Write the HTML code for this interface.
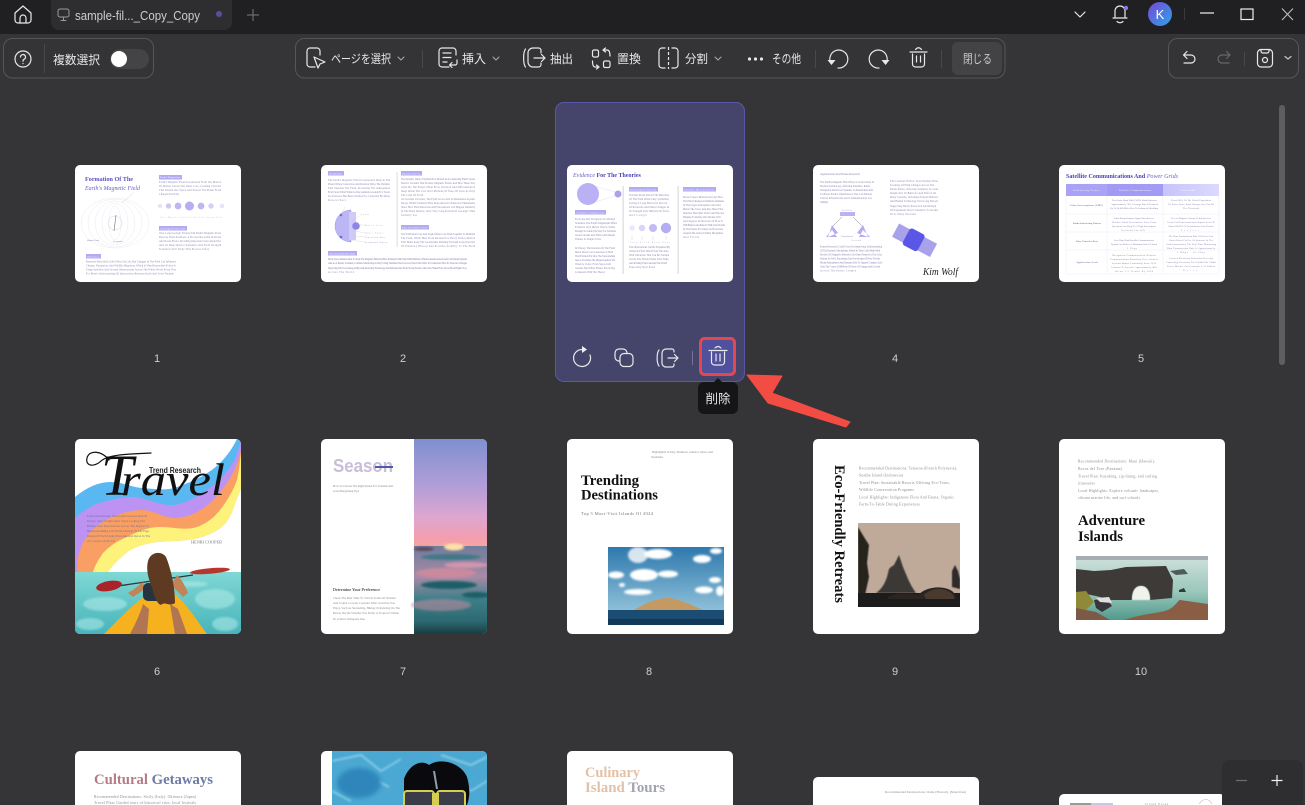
<!DOCTYPE html>
<html><head><meta charset="utf-8">
<style>
html,body{margin:0;padding:0;width:1305px;height:805px;overflow:hidden;background:#353437}
body{position:relative;font-family:"Liberation Sans","Noto Sans CJK JP",sans-serif}
.abs{position:absolute}
.c{position:absolute;width:166px;border-radius:5px;background:#fff;overflow:hidden;display:block;filter:blur(.35px)}
.c text{font-family:"Liberation Serif",serif}
.l{font-size:2.6px;fill:#8a86ae}
.g{font-size:3.8px;fill:#8c8b91}
.g2{font-size:4.6px;fill:#77767c}
.tag{fill:#b2abf2}
.tt{font-size:2.4px;fill:#fff}
.t5{font-size:2.4px;fill:#8581a8}
.b{font-weight:bold}
.ui{position:absolute;left:0;top:0}
.ui text{font-family:"Liberation Sans","Noto Sans CJK JP",sans-serif;fill:#e6e6e6;font-size:12px}
.s{fill:none;stroke:#e8e8e8;stroke-width:1.2;stroke-linecap:round;stroke-linejoin:round}
.n{position:absolute;color:#cfcfcf;font-size:11px;width:40px;text-align:center;line-height:14px}
</style></head><body>

<svg width="0" height="0" style="position:absolute"><defs>
<filter id="b1"><feGaussianBlur stdDeviation="1"/></filter>
<filter id="b2"><feGaussianBlur stdDeviation="2.2"/></filter>
<filter id="b05"><feGaussianBlur stdDeviation=".5"/></filter>
<linearGradient id="sky7" x1="0" y1="0" x2="0" y2="1"><stop offset="0" stop-color="#7f90cf"/><stop offset=".4" stop-color="#ae9dd8"/><stop offset=".7" stop-color="#dca6d0"/><stop offset=".9" stop-color="#f39eb0"/><stop offset="1" stop-color="#f7a79a"/></linearGradient>
<linearGradient id="sea7" x1="0" y1="0" x2="0" y2="1"><stop offset="0" stop-color="#6f7d9b"/><stop offset=".35" stop-color="#a98aa6"/><stop offset=".6" stop-color="#3e7f8a"/><stop offset=".85" stop-color="#2d6a72"/><stop offset="1" stop-color="#173c40"/></linearGradient>
<linearGradient id="sky8" x1="0" y1="0" x2="0" y2="1"><stop offset="0" stop-color="#2e79ae"/><stop offset="1" stop-color="#8fc0d8"/></linearGradient>
<linearGradient id="hd" x1="0" y1="0" x2="1" y2="0"><stop offset="0" stop-color="#a49df6"/><stop offset="1" stop-color="#dcd9ff"/></linearGradient>
<linearGradient id="av" x1="0" y1="0" x2="1" y2="1"><stop offset="0" stop-color="#7a45d8"/><stop offset="1" stop-color="#2aa5e8"/></linearGradient>
<linearGradient id="sea10" x1="0" y1="0" x2="0" y2="1"><stop offset="0" stop-color="#cfe0dc"/><stop offset=".55" stop-color="#9cc8bc"/><stop offset="1" stop-color="#4f9a8c"/></linearGradient>
<linearGradient id="w6" x1="0" y1="0" x2="0" y2="1"><stop offset="0" stop-color="#7fd8d4"/><stop offset="1" stop-color="#48b4bb"/></linearGradient>
</defs></svg>

<!-- top bar / selected card background -->
<div class="abs" style="left:0;top:0;width:1305px;height:34px;background:#202022"></div>
<div class="abs" style="left:51px;top:0;width:181px;height:30px;background:#2e2e31;border-radius:0 0 8px 8px"></div>
<div class="abs" style="left:1279px;top:105px;width:6px;height:260px;background:#5f5d60;border-radius:3px"></div>
<div class="abs" style="left:555px;top:102px;width:188px;height:278px;background:#45456b;border:1px solid #5a56ae;border-radius:9px"></div>

<!-- Card 1 -->
<svg class="c" style="left:75px;top:165px;height:117px" viewBox="0 0 166 117">
<text x="10" y="16" class="b" font-size="6.2" fill="#5c50bf" textLength="48" lengthAdjust="spacingAndGlyphs">Formation Of The</text>
<text x="10" y="25" font-style="italic" font-size="6.2" fill="#6a60c6" textLength="55" lengthAdjust="spacingAndGlyphs">Earth's Magnetic Field</text>
<rect class="tag" x="84" y="10" width="23" height="4.5"/><text class="tt" x="85" y="13.2" textLength="20">Earth's Magnetism</text>
<text class="l" x="84" y="18" textLength="62">Earth's Magnetic Field Is Generated From The Motion</text>
<text class="l" x="84" y="22" textLength="62">Of Molten Iron In The Outer Core, Creating Currents</text>
<text class="l" x="84" y="26" textLength="62">That Extend Into Space And Protect The Planet From</text>
<text class="l" x="84" y="30" textLength="20">Charged Particles</text>
<g><circle cx="85" cy="41" r="2" fill="#e3e0fa"/><circle cx="93.500" cy="41" r="2.700" fill="#cdc8f6"/><circle cx="103" cy="41" r="3.400" fill="#bdb6f3"/><circle cx="114.500" cy="41" r="4.500" fill="#b5aef2"/><circle cx="126" cy="41" r="3.400" fill="#bdb6f3"/><circle cx="136" cy="41" r="2.700" fill="#d3cff7"/><circle cx="147" cy="41" r="2.300" fill="#e6e4fa"/></g>
<text class="l" x="85" y="53" textLength="62" style="font-size:2px;fill:#b5b3c6">Core  Mantle  Crust  Field  Solar  Storm  Flux</text>
<rect class="tag" x="84" y="61" width="28" height="4.500"/><text class="tt" x="85" y="64.300" textLength="25">Geomagnetic Reversal</text>
<text class="l" x="84" y="69" textLength="62">Over Long Geologic Periods The Earth's Magnetic Poles</text>
<text class="l" x="84" y="73" textLength="62">Reverse Their Positions, A Process Recorded In Rocks</text>
<text class="l" x="84" y="77" textLength="62">And Ocean Floors, Providing Important Clues About Past</text>
<text class="l" x="84" y="81" textLength="62">And Its Deep Interior Dynamics And Field Strength</text>
<text class="l" x="84" y="85" textLength="50">Scientists Still Study This Process Today</text>
<g fill="none" stroke="#dcdbe9" stroke-width=".3"><ellipse cx="40" cy="58" rx="6" ry="17"/><ellipse cx="40" cy="58" rx="13" ry="20"/><ellipse cx="40" cy="58" rx="20" ry="22"/><ellipse cx="40" cy="58" rx="27" ry="24"/><ellipse cx="40" cy="58" rx="34" ry="25"/><circle cx="40" cy="58" r="7" stroke="#b5b2cc"/><path d="M41 50L39 66" stroke="#777" stroke-width=".6"/><path d="M47 38L58 28" stroke="#bbb"/></g>
<text class="l" x="12" y="76" style="font-size:2px" textLength="12">Magnetic South</text><text class="l" x="38" y="77" style="font-size:2px" textLength="10">Geographic</text>
<rect class="tag" x="11" y="89" width="15" height="4.500"/><text class="tt" x="12" y="92.300" textLength="12">Influences</text>
<text class="l" x="11" y="97.500" textLength="90">Reversals Have Had Little Effect On Life, But Changes In The Field Can Influence</text>
<text class="l" x="11" y="101.500" textLength="90">Climate, Navigation, And Wildlife Migration, Which Is Why Researchers Follow It</text>
<text class="l" x="11" y="105.500" textLength="90">Using Satellites And Ground Observatories Across The Whole World Every Year</text>
<text class="l" x="11" y="109.500" textLength="88">For Better Understanding Of Interactions Between Earth And Solar Weather</text>
</svg>

<!-- Card 2 -->
<svg class="c" style="left:321px;top:165px;height:117px" viewBox="0 0 166 117">
<rect class="tag" x="7" y="6" width="16" height="4.500"/><text class="tt" x="8" y="9.300" textLength="13">Introduction</text>
<text class="l" x="7" y="16" textLength="62">The Earth's Magnetic Field Is Generated Deep In The</text>
<text class="l" x="7" y="20" textLength="62">Planet Where Convection And Rotation Drive The Dynamo</text>
<text class="l" x="7" y="24" textLength="62">That Sustains The Field, Protecting The Atmosphere</text>
<text class="l" x="7" y="28" textLength="62">From Solar Wind While Giving Animals A Guide For Travel</text>
<text class="l" x="7" y="32" textLength="62">Its Structure Has Been Studied For Centuries By Many</text>
<text class="l" x="7" y="36" textLength="18">Researchers</text>
<path d="M30 45A16 16 0 0 0 30 77L30 45Z" fill="#bdb6f5" stroke="#8f88e0" stroke-width=".4"/><rect x="28" y="47" width="7" height="28" fill="#cfcaf8"/><circle cx="35" cy="61" r="3.800" fill="#8d84ea"/><circle cx="20" cy="50" r="1.300" fill="#7068d8"/><circle cx="20" cy="72" r="1.300" fill="#7068d8"/>
<g stroke="#bbb" stroke-width=".25" fill="none"><path d="M20 50L24 42M24 52L30 44M30 56L40 50M36 60L44 60M34 66L44 68M32 71L44 72M30 75L44 77"/></g>
<text class="l" style="font-size:1.800px" x="40" y="50" textLength="8">Crust</text><text class="l" style="font-size:1.800px" x="44" y="61" textLength="18">Outer Core</text><text class="l" style="font-size:1.800px" x="44" y="68.500" textLength="18">Inner Layer</text><text class="l" style="font-size:1.800px" x="44" y="73" textLength="20">Convection Zone</text><text class="l" style="font-size:1.800px" x="44" y="78" textLength="22">Geodynamo Region</text>
<rect x="75.800" y="7" width=".5" height="75" fill="#b8b8c2"/>
<rect class="tag" x="80" y="6" width="21" height="4.500"/><text class="tt" x="81" y="9.300" textLength="18">Dynamo Theory</text>
<text class="l" x="80" y="15" textLength="74">The Dynamo Theory Explains How Motion In A Conducting Fluid Creates</text>
<text class="l" x="80" y="19" textLength="74">Electric Currents That Produce Magnetic Fields, And How These Stay</text>
<text class="l" x="80" y="23" textLength="74">Alive By The Planet's Heat Flow, Rotation And Differentiation</text>
<text class="l" x="80" y="27" textLength="74">Deep Inside The Core Over Millions Of Years Of Slow Activity</text>
<text class="l" x="80" y="31" textLength="22">The Crust Of Earth</text>
<text class="l" x="80" y="35" textLength="74">As Currents Circulate, The Field Grows And Is Maintained Against</text>
<text class="l" x="80" y="39" textLength="74">Decay, Which Scientists Have Reproduced In Numerical Simulations</text>
<text class="l" x="80" y="43" textLength="74">Show How Field Reversals And Fluctuations Can Happen Suddenly</text>
<text class="l" x="80" y="47" textLength="74">In The Deep Interior, Over Very Long Periods Of Geologic Time</text>
<text class="l" x="80" y="51" textLength="16">Globally Too</text>
<rect class="tag" x="80" y="60" width="28" height="4.500"/><text class="tt" x="81" y="63.300" textLength="25">Role Of Earth's Core</text>
<text class="l" x="80" y="70" textLength="74">The Solid Inner Core And Liquid Outer Core Work Together To Maintain</text>
<text class="l" x="80" y="74" textLength="74">The Field, While Heat From Radioactive Decay Drives Motion</text>
<text class="l" x="80" y="78" textLength="74">That Helps Keep The Geodynamo Running Through Long Intervals</text>
<text class="l" x="80" y="82" textLength="74">Of Planetary History And Provides Stability To The Field</text>
<rect class="tag" x="7" y="86" width="29" height="4.500"/><text class="tt" x="8" y="89.300" textLength="26">Interaction With Solar Wind</text>
<text class="l" x="7" y="95" textLength="139">Many Space Missions Aim To Study The Magnetic Field And How It Interacts With Solar Wind Particles, Which Generates Auroras And Can Disrupt Systems</text>
<text class="l" x="7" y="99" textLength="139">And As A Result, Scientists Continue Monitoring Activity Using Satellites Placed Across Near Earth Orbit To Understand How Its Structure Changes</text>
<text class="l" x="7" y="104" textLength="139">Improving Our Forecasting Ability And Protecting Technology And Infrastructure From Strong Storms, Since The Stakes Have Never Been Higher Now</text>
<text class="l" x="7" y="108" textLength="26">Across The World</text>
</svg>

<!-- Card 3 -->
<svg class="c" style="left:567px;top:165px;height:117px" viewBox="0 0 166 117">
<text x="6" y="12" font-size="6" fill="#6a60c6" font-style="italic">Evidence<tspan class="b" font-style="normal" fill="#4a3fb5"> For The Theories</tspan></text>
<circle cx="21" cy="29" r="11" fill="#b9b1f3"/><circle cx="51" cy="29" r="3.500" fill="#a9a1ee"/><path d="M28 21L48 27M28 37L48 31" stroke="#cfcce8" stroke-width=".3" fill="none"/>
<rect class="tag" x="8" y="45" width="31" height="4.500"/><text class="tt" x="9" y="48.300" textLength="28">Compass Alignments</text>
<text class="l" x="8" y="55" textLength="40">From Ancient Navigators To Modern</text><text class="l" x="8" y="59" textLength="42">Scientists, The Earth's Magnetism Offers</text><text class="l" x="8" y="63" textLength="40">Evidence Of A Dipole That Is Stable</text><text class="l" x="8" y="67" textLength="41">Enough To Guide The Way For Travelers</text><text class="l" x="8" y="71" textLength="40">Across Oceans And Wide Land Masses</text><text class="l" x="8" y="75" textLength="26">Thanks To Simple Tools</text>
<text class="l" x="8" y="84" textLength="40">In Theory, The Rotation Of The Fluid</text><text class="l" x="8" y="88" textLength="38">Metal Outer Core Generates A Field</text><text class="l" x="8" y="92" textLength="40">That Extends Far Into The Surrounding</text><text class="l" x="8" y="96" textLength="40">Space, Forming The Magnetosphere We</text><text class="l" x="8" y="100" textLength="36">Observe Today From Spacecraft</text><text class="l" x="8" y="104" textLength="40">Around The Whole Planet, Every Day</text><text class="l" x="8" y="108" textLength="30">Consistent With The Theory</text>
<rect x="55.800" y="21" width=".5" height="88" fill="#a8a8b4"/><rect x="110.800" y="21" width=".5" height="88" fill="#a8a8b4"/>
<rect class="tag" x="62" y="22" width="29" height="4.500"/><text class="tt" x="63" y="25.300" textLength="26">Paleomagnetic Records</text>
<text class="l" x="62" y="31" textLength="40">Volcanic Rocks Record The Direction</text><text class="l" x="62" y="35" textLength="40">Of The Field When They Solidified,</text><text class="l" x="62" y="39" textLength="38">Giving A Long Historical Record</text><text class="l" x="62" y="43" textLength="40">Of Reversals And Other Changes In</text><text class="l" x="62" y="47" textLength="40">Its Strength Over Millions Of Years</text><text class="l" x="62" y="51" textLength="18">And Longer</text>
<circle cx="65" cy="63" r="2.800" fill="#ebe9fb"/><circle cx="75" cy="63" r="3.200" fill="#d9d5f9"/><circle cx="86" cy="63" r="4" fill="#c1bbf5"/><circle cx="99" cy="63" r="5.200" fill="#b4adf2"/>
<path d="M65 71V75M75 71V75M86 71V75M99 71V75" stroke="#bbb" stroke-width=".3"/>
<text class="l" x="63" y="78" style="font-size:1.800px" textLength="40">Iron  Field  Rock  Core</text>
<text class="l" x="62" y="83" textLength="41">The Observations Can Be Explained By</text><text class="l" x="62" y="87" textLength="40">A Dipole Field Tilted From The Axis,</text><text class="l" x="62" y="91" textLength="40">With Variations That Can Be Tracked</text><text class="l" x="62" y="95" textLength="40">Across The Whole Planet Over Time,</text><text class="l" x="62" y="99" textLength="38">And In Many Places Around The World</text><text class="l" x="62" y="103" textLength="26">Especially Near Poles</text>
<rect class="tag" x="116" y="22" width="33" height="4.500"/><text class="tt" x="117" y="25.300" textLength="30">Satellite Measurements</text>
<text class="l" x="116" y="33" textLength="40">Recent Space Missions Reveal How</text><text class="l" x="116" y="37" textLength="41">The Field Changes At Different Altitudes</text><text class="l" x="116" y="41" textLength="38">In The Upper Atmosphere And Also</text><text class="l" x="116" y="45" textLength="40">Below The Crust, And Also Show Fine</text><text class="l" x="116" y="49" textLength="41">Structure That Older Tools Could Not See</text><text class="l" x="116" y="53" textLength="38">Helping To Refine Our Models Of It</text><text class="l" x="116" y="57" textLength="40">And Support Predictions Of How It</text><text class="l" x="116" y="61" textLength="42">Will Behave And Interact With Solar Storms</text><text class="l" x="116" y="65" textLength="40">In The Future For Improved Forecasts</text><text class="l" x="116" y="69" textLength="40">Around The Globe In Many Disciplines</text><text class="l" x="116" y="73" textLength="16">And Fields</text>
</svg>

<!-- Card 4 -->
<svg class="c" style="left:813px;top:165px;height:117px" viewBox="0 0 166 117">
<text class="l" x="7" y="10" textLength="40" style="font-size:3px">Applications And Future Research</text>
<text class="l" x="7" y="18" textLength="54">The Earth's Magnetic Field Plays A Critical Role In</text><text class="l" x="7" y="22" textLength="50">Modern Technology, Affecting Satellites, Radio</text><text class="l" x="7" y="26" textLength="53">Navigation And Power Systems, So Researchers Aim</text><text class="l" x="7" y="30" textLength="52">To Better Predict Disturbances That Can Disrupt</text><text class="l" x="7" y="34" textLength="52">Critical Infrastructure And Communications Too</text><text class="l" x="7" y="38" textLength="8">Globally</text>
<text class="l" x="77" y="17" textLength="48">The Creation Of New Tools Enables Finer</text><text class="l" x="77" y="21" textLength="44">Tracking Of Field Changes Across The</text><text class="l" x="77" y="25" textLength="48">Entire Planet, Allowing Scientists To Gain</text><text class="l" x="77" y="29" textLength="46">Insight Into Its Behavior And Effects On</text><text class="l" x="77" y="33" textLength="48">Many Systems, Including Natural Habitats</text><text class="l" x="77" y="37" textLength="48">And Human Technology Over Long Periods</text><text class="l" x="77" y="42" textLength="46">Supporting Better Protection And Design</text><text class="l" x="77" y="46" textLength="48">Of Equipment That Is Sensitive To Storms</text><text class="l" x="77" y="50" textLength="26">Over Many Decades</text>
<rect x="27" y="47" width="15" height="4" fill="#b9b2f4"/><text class="l" x="29" y="46" style="font-size:2px" textLength="10">Satellite</text>
<path d="M29 52L19 62M40 52L50 62" stroke="#666" stroke-width=".4"/>
<path d="M15 72L19 60L25 68ZM13 72H24L19 65Z" fill="#b3abf3"/><path d="M55 72L50 60L44 68ZM57 72H46L50 65Z" fill="#b3abf3"/>
<text class="l" x="28" y="72" style="font-size:2px" textLength="12">Transmission</text><text class="l" x="38" y="76" style="font-size:2px" textLength="10">Ground</text>
<text class="l" x="7" y="82.500" textLength="62">Future Research Could Focus On Improving Understanding</text><text class="l" x="7" y="86.500" textLength="60">Of The Dynamo Mechanism, Which In Turn Could Help With</text><text class="l" x="7" y="90.500" textLength="62">Models Of Magnetic Behavior On Other Planets In The Solar</text><text class="l" x="7" y="94.500" textLength="60">System As Well, Expanding Our Knowledge Of How Worlds</text><text class="l" x="7" y="98.500" textLength="62">Retain Atmospheres And Remain Able To Support Complex Life</text><text class="l" x="7" y="102.500" textLength="60">Over The Course Of Billions Of Years Of Change And Growth</text><text class="l" x="7" y="106.500" textLength="36">Across The Entire Cosmos</text>
<g transform="rotate(28 100 75)"><rect x="80" y="67" width="14" height="15" fill="#a7a2ea"/><rect x="107" y="67" width="16" height="15" fill="#a7a2ea"/><rect x="92" y="65" width="17" height="19" rx="3" fill="#5b57e6"/></g>
<text x="110" y="110" font-size="11" font-style="italic" fill="#222" textLength="35" lengthAdjust="spacingAndGlyphs">Kim Wolf</text>
</svg>

<!-- Card 5 -->
<svg class="c" style="left:1059px;top:165px;height:117px" viewBox="0 0 166 117">
<text x="7" y="13" font-size="6.500" class="b" fill="#4a3fb5" textLength="112" lengthAdjust="spacingAndGlyphs">Satellite Communications And <tspan font-style="italic" font-weight="normal" fill="#6a60c6">Power Grids</tspan></text>
<rect x="7" y="19" width="153" height="12" fill="url(#hd)"/><rect x="7" y="19" width="41" height="12" fill="#a9a2f6"/><rect x="48" y="19" width="56" height="12" fill="#a29af5"/>
<text class="tt" x="14" y="26" textLength="26">Influencing Factor</text><text class="tt" x="60" y="26" textLength="32">Satellite Communications</text><text class="tt" x="122" y="26" textLength="14">Power Grids</text>
<g stroke="#e3e2f4" stroke-width=".35"><path d="M7 31V109M48 31V109M104 31V109M160 31V109M7 49H160M7 67H160M7 85H160M7 109H160"/></g>
<text class="t5" x="11" y="41" textLength="33" font-weight="bold">Solar Interruptions (EMP)</text><text class="t5" x="14" y="59" textLength="28" font-weight="bold">Radio Interfering Pattern</text><text class="t5" x="17" y="77" textLength="22" font-weight="bold">Data Transfer Rate</text><text class="t5" x="17" y="98" textLength="22" font-weight="bold">Application Scale</text>
<text class="t5" x="53" y="36" textLength="45">Uses Ionic Band With 150 Hz Radio Interface</text><text class="t5" x="52" y="40" textLength="47">Approximately 70% Coverage Rate Is Reduced</text><text class="t5" x="51" y="44" textLength="48">Up To 90,000 Miles Due To Enhanced Shielding</text>
<text class="t5" x="55" y="54" textLength="40">Solar Storms Impact Signal Interference</text><text class="t5" x="53" y="58" textLength="44">Weather Band Performance Loss From</text><text class="t5" x="53" y="62" textLength="44">Spectrum Can Drop To A High Interruption</text><text class="t5" x="62" y="66" textLength="24">Overload For 30%</text>
<text class="t5" x="55" y="76" textLength="40">Low Data Orbit Satellite Communication</text><text class="t5" x="52" y="80" textLength="46">System Can Deliver A Maximum Rate Of About</text><text class="t5" x="68" y="84" textLength="10">1 Gbps</text>
<text class="t5" x="53" y="91" textLength="44">Navigation Communication Weather</text><text class="t5" x="51" y="95" textLength="48">Communications Broadcast Over Aviation</text><text class="t5" x="53" y="99" textLength="44">Systems Impact Continually Since 2012</text><text class="t5" x="52" y="103" textLength="46">Continue To Increase Approximately 40%</text><text class="t5" x="56" y="107" textLength="38">Below 1.5 Terabit By 2024</text>
<text class="t5" x="112" y="36" textLength="40">Reach 90% Of The World Population</text><text class="t5" x="109" y="40" textLength="46">On Power Lines, Some Storage Area Can Hit</text><text class="t5" x="124" y="44" textLength="16">The Threshold</text>
<text class="t5" x="112" y="54" textLength="40">Severe Magnetic Storm Or Interference</text><text class="t5" x="108" y="58" textLength="48">Create Grid Interconnection Impact Level To</text><text class="t5" x="109" y="62" textLength="46">About 500 KV Or Transmission Line Reduce</text><text class="t5" x="122" y="66" textLength="18">Service</text>
<text class="t5" x="110" y="72" textLength="44">The Data Transmission Rate Of Power Grid</text><text class="t5" x="110" y="76" textLength="44">Varies Based On Use Of Systems. In The</text><text class="t5" x="107" y="80" textLength="50">Grid Infrastructure The Real Time Monitoring</text><text class="t5" x="108" y="84" textLength="48">Data Transmission Rate Is Approximately</text><text class="t5" x="118" y="88" textLength="28">1 Mbps - 10 Gbps</text>
<text class="t5" x="110" y="94" textLength="44">Covered Electricity Renewable Recently</text><text class="t5" x="107" y="98" textLength="50">Connecting Generators For 10,000k The Global</text><text class="t5" x="108" y="102" textLength="48">Power Market Can Consume 5-13 Billion</text><text class="t5" x="124" y="106" textLength="14">Users</text>
</svg>

<!-- Card 6 -->
<svg class="c" style="left:75px;top:439px;height:195px" viewBox="0 0 166 195">
<path d="M0 58C12 48 24 43 35 43C48 43 58 49 68 49C80 50 92 52 102 48C120 42 135 34 145 24C153 16 158 8 162 0H166V133H0Z" fill="#59b8f2"/>
<path d="M0 79C8 72 18 65 28 63C40 60 48 58 58 58C72 59 85 67 98 66C110 65 122 58 132 51C145 42 152 33 158 24C162 16 164 8 166 1V133H0Z" fill="#bc93f2"/>
<path d="M2 133C2 120 4 112 8 104C14 92 24 84 35 79C46 74 56 71 68 71C80 72 92 80 102 79C115 78 127 71 135 64C146 54 152 44 158 34C161 28 164 20 166 11V133Z" fill="#fa9f64"/>
<path d="M18 133C20 126 24 120 28 114C35 107 42 102 52 98C62 93 72 88 85 88C96 88 108 91 118 89C128 87 138 80 145 71C152 62 158 52 162 41C164 32 165 22 166 14V50C160 62 158 76 150 85C142 93 132 97 120 100C108 102 96 102 84 103C72 104 58 108 50 115C42 122 37 127 33 133Z" fill="#fdf27a"/>
<path d="M33 133C37 127 42 122 50 115C58 108 72 104 84 103C96 102 108 102 120 100C132 97 142 93 150 85C158 76 160 62 166 50V133Z" fill="#fff"/>
<rect x="0" y="133" width="166" height="62" fill="url(#w6)"/>
<g filter="url(#b1)" fill="#b3ecea" opacity=".55"><ellipse cx="30" cy="165" rx="22" ry="7"/><ellipse cx="140" cy="160" rx="20" ry="10"/><ellipse cx="15" cy="185" rx="14" ry="6"/><ellipse cx="150" cy="185" rx="13" ry="7"/><ellipse cx="115" cy="145" rx="18" ry="3"/></g>
<path d="M34 21C26 11 14 11 12 19C10 28 20 28 26 22C34 15 56 15 76 14" fill="none" stroke="#111" stroke-width="1.200" stroke-linecap="round"/>
<text x="26" y="56" font-style="italic" font-size="58" fill="#111">T</text>
<text x="46" y="56" font-style="italic" font-size="46" fill="#111" textLength="104" lengthAdjust="spacingAndGlyphs">ravel</text>
<text x="74" y="34" style="font-family:'Liberation Sans',sans-serif" font-size="7.800" font-weight="bold" fill="#222" textLength="52" lengthAdjust="spacingAndGlyphs">Trend Research</text>
<text class="l" style="fill:#6e6a88" x="12" y="78" textLength="60">Trend Destinations: Plan Island Getaway Retreat</text><text class="l" style="fill:#6e6a88" x="12" y="83" textLength="58">Design, Most Sought-After Spots Looking Into</text><text class="l" style="fill:#6e6a88" x="12" y="88" textLength="62">Hidden Gem Destinations Across The Region To</text><text class="l" style="fill:#6e6a88" x="12" y="93" textLength="62">Help Keep Memory Of Travel Journeys To The Edge</text><text class="l" style="fill:#6e6a88" x="12" y="98" textLength="63">Design Of Each Island Shoreline And Relax In The</text><text class="l" style="fill:#6e6a88" x="12" y="103" textLength="28">All Connected Worlds</text>
<text x="116" y="104.500" font-size="4" fill="#77777f" textLength="31" lengthAdjust="spacingAndGlyphs">HENRI COOPER</text>
<path d="M36 148L118 136" stroke="#333" stroke-width="1.300"/>
<ellipse cx="34" cy="147" rx="13" ry="5" fill="#a92428" transform="rotate(-10 34 147)"/><ellipse cx="135" cy="132" rx="20" ry="2.800" fill="#b8352e" transform="rotate(-5 135 132)"/>
<path d="M29 195C42 182 58 165 75 153H98C112 165 122 182 132 195Z" fill="#f6b11f"/>
<path d="M55 195C62 182 66 172 68 165L74 170L72 195Z" fill="#b07552"/><path d="M100 195C98 182 96 172 95 165L103 170L112 195Z" fill="#b07552"/>
<path d="M53 154C60 150 64 146 68 143L70 150L58 158ZM113 154C110 146 106 140 102 136L96 146L108 158Z" fill="#c08458"/>
<rect x="68" y="144" width="30" height="18" rx="5" fill="#26343f"/>
<path d="M73 122C76 112 87 112 91 118C96 130 100 148 100 164C94 168 90 162 86 166C80 164 78 150 76 146C73 138 71 130 73 122Z" fill="#5e3a22"/>
</svg>

<!-- Card 7 -->
<svg class="c" style="left:321px;top:439px;height:195px" viewBox="0 0 166 195">
<rect x="93" y="0" width="73" height="110" fill="url(#sky7)"/><rect x="93" y="107" width="73" height="88" fill="url(#sea7)"/>
<ellipse cx="133" cy="108" rx="10" ry="3.500" fill="#ffe0a8" filter="url(#b1)"/>
<g filter="url(#b1)"><ellipse cx="103" cy="110" rx="10" ry="2" fill="#5a4a5c"/><ellipse cx="130" cy="118" rx="30" ry="3" fill="#3f7888"/><ellipse cx="125" cy="134" rx="30" ry="5" fill="#c98a9e"/><ellipse cx="145" cy="126" rx="22" ry="3" fill="#e09ab0" opacity=".8"/><ellipse cx="128" cy="146" rx="28" ry="4" fill="#1f5e66"/><ellipse cx="155" cy="156" rx="14" ry="3" fill="#1f5e66"/><ellipse cx="120" cy="166" rx="30" ry="6" fill="#c58aa0" opacity=".55"/></g>
<text x="12" y="33" style="font-family:'Liberation Sans',sans-serif" font-weight="bold" font-size="18" fill="#cabdd8" textLength="60" lengthAdjust="spacingAndGlyphs">Season</text>
<rect x="54" y="27" width="18" height="2" fill="#4f5aa8"/>
<text class="g" x="12" y="48" textLength="60" style="font-size:3px">How To Choose The Right Island For Tourism And</text><text class="g" x="12" y="53" textLength="26" style="font-size:3px">Great Bargaining Tips</text>
<text x="12" y="152" font-size="4.400" font-weight="bold" fill="#57565e" textLength="47" lengthAdjust="spacingAndGlyphs">Determine Your Preference</text>
<text class="g" style="font-size:3px" x="12" y="160" textLength="63">Check The Best Time To Visit In Terms Of Weather</text><text class="g" style="font-size:3px" x="12" y="165" textLength="62">And Tourist Crowds, Consider What Activities You</text><text class="g" style="font-size:3px" x="12" y="170" textLength="67">Enjoy, Such As Snorkeling, Hiking Or Relaxing On The</text><text class="g" style="font-size:3px" x="12" y="175" textLength="66">Beach, Decide Whether You Prefer A Tropical Climate</text><text class="g" style="font-size:3px" x="12" y="181" textLength="32">Or A More Temperate One</text>
</svg>

<!-- Card 8 -->
<svg class="c" style="left:567px;top:439px;height:195px" viewBox="0 0 166 195">
<text class="g" x="85" y="14" textLength="61" style="font-size:3px">Highlighted In Italy, Maldives, Jamaica, Maui, And</text><text class="g" x="84" y="19" textLength="12" style="font-size:3px">Seychelles</text>
<text x="14" y="46" class="b" font-size="15" fill="#111" textLength="58" lengthAdjust="spacingAndGlyphs">Trending</text>
<text x="14" y="60.500" class="b" font-size="15" fill="#111" textLength="77" lengthAdjust="spacingAndGlyphs">Destinations</text>
<text class="g2" x="14" y="76" textLength="72">Top 5 Must-Visit Islands Of 2024</text>
<svg x="41" y="108" width="116" height="78" viewBox="0 0 116 78"><rect width="116" height="64" fill="url(#sky8)"/>
<g filter="url(#b1)" fill="#fff"><ellipse cx="30" cy="8" rx="10" ry="8" opacity=".8"/><ellipse cx="50" cy="7" rx="14" ry="5"/><ellipse cx="94" cy="12" rx="9" ry="4"/><ellipse cx="108" cy="4" rx="6" ry="3"/><ellipse cx="8" cy="28" rx="8" ry="3.500"/><ellipse cx="36" cy="28" rx="14" ry="6"/><ellipse cx="60" cy="27" rx="10" ry="3.500"/><ellipse cx="107" cy="33" rx="6" ry="3"/><ellipse cx="30" cy="45" rx="14" ry="3"/><ellipse cx="96" cy="43" rx="9" ry="3.500"/><ellipse cx="112" cy="44" rx="4" ry="5"/><ellipse cx="14" cy="38" rx="3" ry="2"/></g>
<path d="M24 64C36 57 48 51 60 51C72 52 86 59 97 64Z" fill="#c49a62"/>
<rect y="63" width="116" height="15" fill="#1b4d72"/><rect y="72" width="116" height="6" fill="#123a58"/></svg>
</svg>

<!-- Card 9 -->
<svg class="c" style="left:813px;top:439px;height:195px" viewBox="0 0 166 195">
<text transform="translate(19 26) rotate(90)" y="-3" class="b" font-size="15" fill="#111" textLength="138" lengthAdjust="spacingAndGlyphs">Eco-Friendly Retreats</text>
<text class="g" x="46" y="30.500" textLength="98">Recommended Destinations: Tetiaroa (French Polynesia),</text><text class="g" x="46" y="37.500" textLength="44">Sumba Island (Indonesia)</text><text class="g" x="46" y="45" textLength="91">Travel Plan: Sustainable Resorts Offering Eco-Tours,</text><text class="g" x="46" y="52" textLength="55">Wildlife Conservation Programs</text><text class="g" x="46" y="59.500" textLength="95">Local Highlights: Indigenous Flora And Fauna; Organic</text><text class="g" x="46" y="66.500" textLength="61">Farm-To-Table Dining Experiences</text>
<svg x="45" y="84" width="102" height="84" viewBox="0 0 102 84"><rect width="102" height="84" fill="#bfaa99"/>
<g filter="url(#b05)"><path d="M0 4L6 14L11 22L9 40L11 54L7 72L0 74Z" fill="#25211f"/><path d="M18 70C24 66 27 60 29 54L31 46L33 44L36 42L41 32L45 44L50 56L54 64L58 70Z" fill="#3a3836"/><path d="M94 64L94 48L97 42L100 48L102 56V66Z" fill="#2f2c2b"/></g>
<rect y="70" width="102" height="14" fill="#1d1c1d"/><path d="M30 74C38 70 50 70 60 72C66 66 78 62 90 66C96 68 98 72 98 76H30Z" fill="#2b2422"/><path d="M66 72C72 66 82 64 90 68C94 70 97 74 96 76H68Z" fill="#493a30"/>
<path d="M12 69H60" stroke="#aaa" stroke-width="1.200" opacity=".7" filter="url(#b05)"/></svg>
</svg>

<!-- Card 10 -->
<svg class="c" style="left:1059px;top:439px;height:195px" viewBox="0 0 166 195">
<text class="g" x="19" y="23.500" textLength="77">Recommended Destinations: Maui (Hawaii),</text><text class="g" x="19" y="31" textLength="44">Bocas del Toro (Panama)</text><text class="g" x="19" y="38.500" textLength="79">Travel Plan: Kayaking, zip-lining, and surfing</text><text class="g" x="19" y="45.500" textLength="17">itineraries</text><text class="g" x="19" y="53" textLength="81">Local Highlights: Explore volcanic landscapes,</text><text class="g" x="19" y="60" textLength="62">vibrant marine life, and surf schools</text>
<text x="19" y="86" class="b" font-size="14.500" fill="#111" textLength="67" lengthAdjust="spacingAndGlyphs">Adventure</text>
<text x="19" y="102" class="b" font-size="14.500" fill="#111" textLength="45" lengthAdjust="spacingAndGlyphs">Islands</text>
<svg x="17" y="117" width="132" height="64" viewBox="0 0 132 64"><rect width="132" height="64" fill="url(#sea10)"/><rect width="132" height="4" fill="#a6aeb4"/>
<path d="M0 13L18 15L35 14L50 11L90 10L97 24L96 42L74 44C74 34 70 30 65 30C60 30 56 34 56 44L35 44L20 40L0 36Z" fill="#3e3a38"/><path d="M56 44C56 34 60 30 65 30C70 30 74 34 74 44Z" fill="#f0f2ec" filter="url(#b05)"/>
<path d="M94 15L108 13L112 18L100 19Z" fill="#4e5b5c"/><path d="M103 34L108 32L110 36L103 36Z" fill="#2f3b3c"/>
<path d="M0 36L10 35L18 46L10 54L0 54Z" fill="#8e8a3a"/><path d="M18 44L30 42L36 50L26 56L20 52Z" fill="#38363a"/><path d="M20 42L33 41L36 47L24 46Z" fill="#dfe0de"/>
<path d="M0 52L20 56L34 64H0Z" fill="#7d5a48"/><path d="M48 64C64 58 80 58 92 54C100 50 102 44 104 44L132 48V64Z" fill="#8a5e44"/></svg>
</svg>

<!-- Row 3 -->
<svg class="c" style="left:75px;top:751px;height:54px;border-radius:5px 5px 0 0" viewBox="0 0 166 54">
<text x="19" y="33" class="b" font-size="14.300" fill="#b67c83" textLength="119" lengthAdjust="spacingAndGlyphs">Cultural <tspan fill="#6e7aa8">Getaways</tspan></text>
<text class="g" x="19" y="47" textLength="102">Recommended Destinations: Sicily (Italy), Okinawa (Japan)</text><text class="g" x="19" y="53" textLength="102">Travel Plan: Guided tours of historical sites, local festivals</text>
</svg>
<svg class="c" style="left:321px;top:751px;height:54px;border-radius:5px 5px 0 0" viewBox="0 0 166 54">
<rect x="11" width="155" height="54" fill="#4aa8d2"/>
<g filter="url(#b1)" fill="none" stroke="#a6dcef" stroke-width="1.300"><path d="M11 10L40 4L60 20L80 8M20 30L45 24L68 36M120 4L150 14L166 6M130 24L150 40L166 30M11 40L30 50"/></g>
<ellipse cx="38" cy="32" rx="22" ry="15" fill="#2e86bb" filter="url(#b2)"/>
<path d="M83 54V28C88 14 100 8 108 14C120 6 140 12 146 26C150 40 148 48 146 54Z" fill="#0a0a0e"/>
<rect x="83" y="40" width="30" height="20" rx="3" fill="#3a3d48" stroke="#d4cf4e" stroke-width="2"/><rect x="116" y="40" width="28" height="20" rx="3" fill="#3a3d48" stroke="#d4cf4e" stroke-width="2"/><rect x="111" y="42" width="7" height="12" fill="#d4cf4e"/>
<path d="M113 20L116 38" stroke="#8fa0a8" stroke-width="2"/>
</svg>
<svg class="c" style="left:567px;top:751px;height:54px;border-radius:5px 5px 0 0" viewBox="0 0 166 54">
<text x="18" y="26" class="b" font-size="14.500" fill="#e3c1a6" textLength="55" lengthAdjust="spacingAndGlyphs">Culinary</text>
<text x="18" y="41" class="b" font-size="14.500" fill="#e3c1a6" textLength="80" lengthAdjust="spacingAndGlyphs">Island <tspan fill="#a1a5b1">Tours</tspan></text>
</svg>
<svg class="c" style="left:813px;top:777px;height:28px;border-radius:5px 5px 0 0" viewBox="0 0 166 28">
<text class="g" x="72" y="16" textLength="81" style="font-size:3.400px">Recommended Destinations: Oahu (Hawaii), (Mauritius)</text>
</svg>
<svg class="c" style="left:1059px;top:794px;height:11px;border-radius:5px 5px 0 0" viewBox="0 0 166 11">
<rect x="11" y="9" width="21" height="2" fill="#9a9a9a"/><rect x="32" y="9" width="22" height="2" fill="#c9c6ec"/><text class="g" x="86" y="11" textLength="23" style="font-size:3px">Island Picks</text>
<path d="M140 10C144 4 150 4 153 10" stroke="#d8b0b0" fill="none" stroke-width=".6"/>
</svg>
<div class="abs" style="left:1222px;top:760px;width:81px;height:45px;background:#2e2e30;border-radius:8px 8px 0 0"></div>

<!-- Page numbers -->
<div class="n" style="left:137px;top:352px">1</div><div class="n" style="left:383px;top:352px">2</div><div class="n" style="left:875px;top:352px">4</div><div class="n" style="left:1121px;top:352px">5</div>
<div class="n" style="left:137px;top:665px">6</div><div class="n" style="left:383px;top:665px">7</div><div class="n" style="left:629px;top:665px">8</div><div class="n" style="left:875px;top:665px">9</div><div class="n" style="left:1121px;top:665px">10</div>

<!-- UI overlay -->
<svg class="ui" width="1305" height="805" viewBox="0 0 1305 805">
<!-- top bar -->
<path class="s" d="M15 13L23 6L31 13V20a3 3 0 0 1-3 3H18a3 3 0 0 1-3-3ZM20 23V18a3 3 0 0 1 6 0V23"/>
<g class="s" style="stroke:#9a9a9e;stroke-width:1"><rect x="58" y="9" width="11" height="8" rx="2"/><path d="M63.500 17V20M61 20.500H66"/></g>
<text x="75" y="20" style="font-size:13px;fill:#cdcdcd" textLength="125" lengthAdjust="spacingAndGlyphs">sample-fil..._Copy_Copy</text>
<circle cx="219" cy="14" r="3" fill="#55509a"/>
<path d="M253 9V21M247 15H259" stroke="#6a6a6c" stroke-width="1.200"/>
<path class="s" d="M1075 12L1080 17L1085 12"/>
<path class="s" d="M1113 18H1127M1115 18V11a5 5 0 0 1 10 0V18M1117 21.500Q1120 24 1123 21.500"/><circle cx="1126" cy="8" r="2.200" fill="#8a78e0"/>
<circle cx="1160" cy="14" r="12" fill="url(#av)"/><text x="1160" y="19" text-anchor="middle" style="font-size:13px;fill:#fff">K</text>
<path d="M1184.500 8V20" stroke="#3a3a3c"/>
<path d="M1200 13H1214" stroke="#eee" stroke-width="1.200"/><rect x="1241" y="9" width="12" height="10.500" fill="none" stroke="#eee" stroke-width="1.200"/><path d="M1282 8.500L1293 20M1293 8.500L1282 20" stroke="#bbb" stroke-width="1.100"/>

<!-- group boxes -->
<g fill="#343437" stroke="#56565a" stroke-width="1"><rect x="3.500" y="38.500" width="150" height="39.500" rx="9"/><rect x="295.500" y="38.500" width="709.500" height="39.500" rx="9"/><rect x="1168.500" y="38.500" width="130" height="39.500" rx="9"/></g>

<!-- group 1 -->
<circle class="s" cx="23" cy="59" r="8"/><path class="s" d="M20.500 57a2.500 2.500 0 1 1 3.700 2.200c-.9.500-1.200 1-1.200 2M23 63.500V63.600"/>
<path d="M44.500 44V73" stroke="#48484b"/>
<text x="53" y="64" textLength="47" lengthAdjust="spacingAndGlyphs">複数選択</text>
<rect x="110" y="49" width="39" height="20" rx="10" fill="#444447"/><circle cx="119" cy="59" r="8" fill="#fff"/>

<!-- group 2 -->
<path class="s" d="M315 67H310a3 3 0 0 1-3-3V51a3 3 0 0 1 3-3H317a3 3 0 0 1 3 3V55"/><path class="s" d="M314 57L325 62L320 64L318 68Z"/>
<text x="331" y="63" textLength="60" lengthAdjust="spacingAndGlyphs">ページを選択</text>
<path d="M398 57L401 60L404 57" fill="none" stroke="#aaa" stroke-linecap="round"/>
<path d="M422.500 50V68" stroke="#48484b"/>
<path class="s" d="M456 55V51a3 3 0 0 0-3-3H442a3 3 0 0 0-3 3V64a3 3 0 0 0 3 3H449M443 53H451M443 57.500H451M443 62H447M457 60V63a2 2 0 0 1-2 2H450M452 62.500L449.500 65L452 67.500"/>
<text x="462" y="63" textLength="24">挿入</text>
<path d="M493 57L496 60L499 57" fill="none" stroke="#aaa" stroke-linecap="round"/>
<path class="s" d="M525.500 49C523 52 523 64 525.500 67M541 53V50.500a2.500 2.500 0 0 0-2.500-2.500H533a5 5 0 0 0-5 5V62a5 5 0 0 0 5 5H538.500a2.500 2.500 0 0 0 2.500-2.500V63M534 58H545M541.500 54.500L545 58L541.500 61.500"/>
<text x="550" y="63" textLength="23" lengthAdjust="spacingAndGlyphs">抽出</text>
<path class="s" d="M594 50H597a1.500 1.500 0 0 1 1.500 1.500V55.500a1.500 1.500 0 0 1-1.500 1.500H594a1.500 1.500 0 0 1-1.500-1.500V51.500a1.500 1.500 0 0 1 1.500-1.500ZM605 61H608.500a1.500 1.500 0 0 1 1.500 1.500V66a1.500 1.500 0 0 1-1.500 1.500H605a1.500 1.500 0 0 1-1.500-1.500V62.500a1.500 1.500 0 0 1 1.500-1.500ZM603 50H607Q610 50 610 56M603 50L605.500 48M603 50L605.500 52M599 67H595Q592.500 67 592.500 61M599 67L596.500 65M599 67L596.500 69"/>
<text x="617" y="63" textLength="24">置換</text>
<path class="s" d="M665 48H662a3 3 0 0 0-3 3V65a3 3 0 0 0 3 3H665M672 48H675a3 3 0 0 1 3 3V65a3 3 0 0 1-3 3H672"/><path d="M668.500 47V69" stroke="#e8e8e8" stroke-width="1.200" stroke-dasharray="3 2"/>
<text x="685" y="63" textLength="23" lengthAdjust="spacingAndGlyphs">分割</text>
<path d="M715 57L718 60L721 57" fill="none" stroke="#aaa" stroke-linecap="round"/>
<circle cx="749.500" cy="59" r="1.600" fill="#e8e8e8"/><circle cx="755.500" cy="59" r="1.600" fill="#e8e8e8"/><circle cx="761.500" cy="59" r="1.600" fill="#e8e8e8"/>
<text x="772" y="63" textLength="29" lengthAdjust="spacingAndGlyphs">その他</text>
<path d="M815.500 50V68" stroke="#48484b"/>
<path class="s" d="M831 63.500A9 9 0 1 1 838 68"/><path d="M827.500 60H835.500L831.500 65Z" fill="#e8e8e8"/>
<path class="s" d="M886 63.500A9 9 0 1 0 879 68"/><path d="M881.500 60H889.500L885.500 65Z" fill="#e8e8e8"/>
<path class="s" d="M910 52H927M915.500 49.500Q918.500 46 921.500 49.500M912.500 54V64a3 3 0 0 0 3 3H921.500a3 3 0 0 0 3-3V54M916.500 56V62M920.500 56V62"/>
<path d="M941.500 50V68" stroke="#48484b"/>
<rect x="952" y="42" width="50" height="33" rx="6" fill="#434346"/>
<text x="963" y="63" textLength="29" lengthAdjust="spacingAndGlyphs" style="fill:#c9c9c9">閉じる</text>

<!-- group 3 -->
<path class="s" d="M1184 55H1191a4 4 0 0 1 0 8H1184M1187 51.500L1183.500 55L1187 58.500"/>
<path d="M1230 55H1222a4 4 0 0 0 0 8H1229M1226.500 51.500L1230 55L1226.500 58.500" fill="none" stroke="#68686b" stroke-width="1.200" stroke-linecap="round" stroke-linejoin="round"/>
<path d="M1244.500 52V66" stroke="#48484b"/>
<rect class="s" x="1257.500" y="49.500" width="15" height="17.500" rx="3.500"/><path class="s" d="M1261 49.500V51a2 2 0 0 0 2 2H1267a2 2 0 0 0 2-2V49.500"/><circle class="s" cx="1265" cy="60" r="2.500"/>
<path d="M1285 56.500L1288 59L1291 56.500" fill="none" stroke="#c8c8c8" stroke-width="1.200" stroke-linecap="round"/>

<!-- selected card actions -->
<path class="s" d="M582 349.500A8.500 8.500 0 1 0 590 355"/><path d="M582 346L587 349.500L582 353Z" fill="#f0f0f0"/>
<g class="s"><rect x="615" y="349" width="12" height="12" rx="4"/><rect x="620" y="353.500" width="13" height="13" rx="4" fill="#45456b"/></g>
<path class="s" d="M659 350C656.500 353 656.500 363 659 366M674 352V351a2 2 0 0 0-2-2H666a4 4 0 0 0-4 4V363a4 4 0 0 0 4 4H672a2 2 0 0 0 2-2V364M668 358H678M674.500 354.500L678 358L674.500 361.500"/>
<path d="M692.500 351V365" stroke="#75759a"/>
<rect x="700.500" y="338.500" width="34" height="36" rx="4" fill="#50509c" stroke="#e4484e" stroke-width="3"/>
<path class="s" d="M709 350.500H727M715 348Q718 345 721 348M711.500 352V362a3 3 0 0 0 3 3H721.500a3 3 0 0 0 3-3V352M716 354V361M720 354V361"/>

<!-- tooltip -->
<path d="M713 383L718 378L723 383Z" fill="#151517"/>
<rect x="698" y="382" width="40" height="32" rx="6" fill="#151517"/>
<text x="718" y="403" text-anchor="middle" style="font-size:12.500px;fill:#e8e8e8">削除</text>

<!-- red arrow -->
<path d="M747 375L782 376L772 393L850 422L846 427L768 403Z" fill="#f24c44" stroke="#f24c44" stroke-linejoin="round"/>

<!-- zoom -->
<path d="M1236 780.500H1247" stroke="#6e6e70" stroke-width="1.200"/><path d="M1277 775V786M1271.500 780.500H1282.500" stroke="#f0f0f0" stroke-width="1.200"/>
</svg>
</body></html>
